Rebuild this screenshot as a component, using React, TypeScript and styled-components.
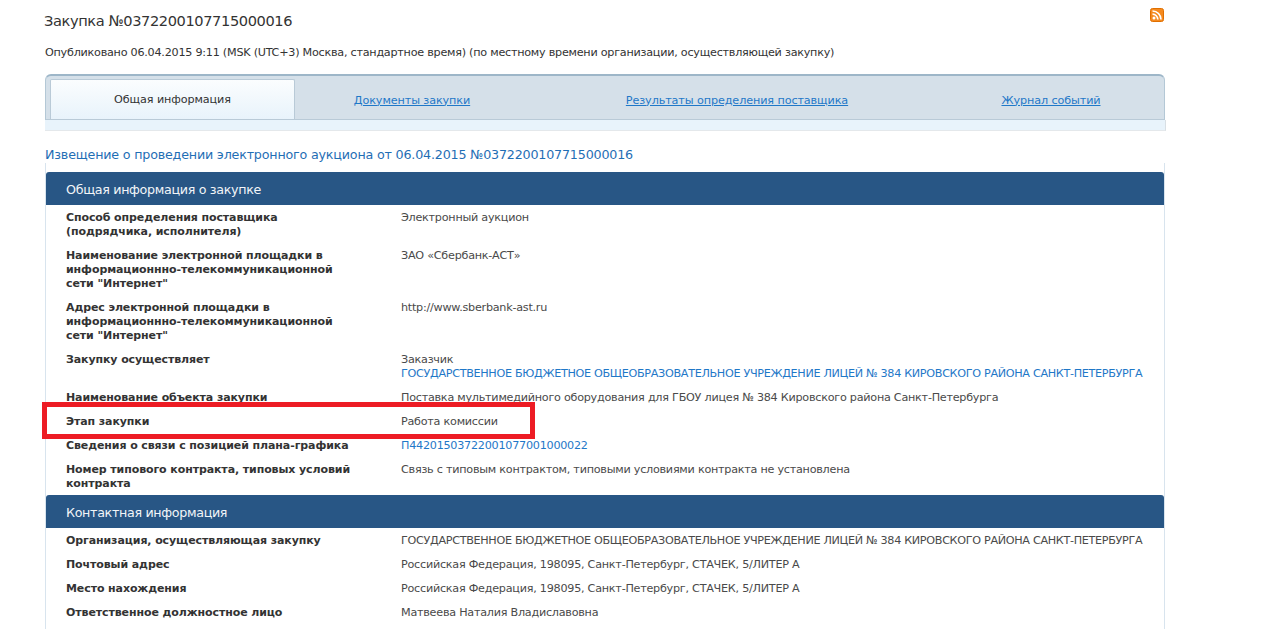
import React from 'react';
import styled, { createGlobalStyle } from 'styled-components';

const GlobalStyle = createGlobalStyle`
  html, body { margin: 0; padding: 0; background: #fff; overflow: hidden; }
  body { font-family: "DejaVu Sans", "Noto Sans", sans-serif; font-size: 11.2px; letter-spacing: -0.25px; color: #3c3c3c; }
`;

const Page = styled.div`
  position: relative;
  width: 1120px;
  height: 629px;
  margin-left: 45px;
`;

const TitleRow = styled.div`
  display: flex;
  justify-content: space-between;
  align-items: flex-start;
  height: 46px;
`;

const Title = styled.h1`
  margin: 11px 0 0 -1px;
  font-size: 14.6px;
  line-height: 19px;
  letter-spacing: -0.4px;
  font-weight: 400;
  color: #333;
`;

const Rss = styled.svg`
  width: 14px;
  height: 14px;
  margin: 8px 1px 0 0;
`;

const Published = styled.div`
  line-height: 14px;
  height: 28px;
  color: #333;
`;

const TabBar = styled.div`
  width: 1120px;
  height: 46px;
  box-sizing: border-box;
  padding: 5px 0 0 4px;
  display: grid;
  grid-template-columns: 245px 234px 416px 212px;
  background: #d5e0e9;
  border-top: 2px solid #9db6c8;
  border-right: 1px solid #b4c8d6;
  border-left: 1px solid #b4c8d6;
  border-bottom: 1px solid #b9cad7;
  border-radius: 6px 6px 0 0;
`;

const Tab = styled.div<{ $active?: boolean }>`
  display: flex;
  align-items: center;
  justify-content: center;
  margin-top: ${p => (p.$active ? '-2px' : '0')};
  letter-spacing: -0.1px;
  color: #333;
  background: ${p => (p.$active ? 'linear-gradient(#fbfdfe, #e8f3fb)' : 'transparent')};
  border: ${p => (p.$active ? '1px solid #b9cad7' : 'none')};
  border-bottom: none;
  border-radius: 2px 2px 0 0;
`;

const TabLink = styled.a`
  color: #1f78c8;
  text-decoration: underline;
`;

const TabStrip = styled.div`
  width: 1121px;
  height: 11px;
  background: #e8f3fb;
  border-bottom: 1px solid #e4e8eb;
  border-right: 1px solid #d8dfe4;
  box-sizing: border-box;
`;

const Notice = styled.div`
  margin-top: 16px;
  font-size: 12.7px;
  letter-spacing: -0.19px;
  line-height: 16px;
  height: 16px;
  color: #1f6eb5;
`;

const Sheet = styled.div`
  height: 466px;
  padding-top: 9px;
  box-sizing: border-box;
  border-left: 1px solid #d8e4ee;
  border-right: 1px solid #d8e4ee;
  width: 1120px;
`;

const SectionHead = styled.div`
  height: 33px;
  box-sizing: border-box;
  display: flex;
  align-items: center;
  padding: 1px 0 0 20px;
  background: #285685;
  color: #f2f5f8;
  font-size: 12.7px;
  letter-spacing: -0.33px;
  border-radius: 3px 3px 0 0;
`;

const Row = styled.div`
  display: grid;
  grid-template-columns: 335px 1fr;
  padding: 6px 0 4px 20px;
  line-height: 14px;
`;

const Label = styled.div`
  font-weight: 700;
  font-size: 11px;
  letter-spacing: -0.1px;
  color: #333;
  width: 288px;
`;

const Value = styled.div`
  color: #4a4a4a;
`;

const ValueLink = styled.a`
  color: #1f78c8;
  display: block;
`;

const OrgName = styled.span`
  letter-spacing: -0.32px;
`;

const Highlight = styled.div`
  position: absolute;
  left: -3px;
  top: 402px;
  width: 493px;
  height: 37px;
  box-sizing: border-box;
  border: 5px solid #ed1c24;
`;

const ORG = 'ГОСУДАРСТВЕННОЕ БЮДЖЕТНОЕ ОБЩЕОБРАЗОВАТЕЛЬНОЕ УЧРЕЖДЕНИЕ ЛИЦЕЙ № 384 КИРОВСКОГО РАЙОНА САНКТ-ПЕТЕРБУРГА';
const ADDRESS = 'Российская Федерация, 198095, Санкт-Петербург, СТАЧЕК, 5/ЛИТЕР А';

export default function App() {
  return (
    <Page>
      <GlobalStyle />
      <TitleRow>
        <Title>Закупка №0372200107715000016</Title>
        <Rss viewBox="0 0 14 14">
          <rect x="0.5" y="0.5" width="13" height="13" rx="2" fill="#f58a1f" stroke="#e06f00" />
          <circle cx="4" cy="10" r="1.5" fill="#fff" />
          <path d="M2.5 6.2a5.3 5.3 0 0 1 5.3 5.3M2.5 3a8.5 8.5 0 0 1 8.5 8.5" fill="none" stroke="#fff" strokeWidth="1.7" />
        </Rss>
      </TitleRow>
      <Published>Опубликовано 06.04.2015 9:11 (MSK (UTC+3) Москва, стандартное время) (по местному времени организации, осуществляющей закупку)</Published>
      <TabBar>
        <Tab $active>Общая информация</Tab>
        <Tab><TabLink>Документы закупки</TabLink></Tab>
        <Tab><TabLink>Результаты определения поставщика</TabLink></Tab>
        <Tab><TabLink>Журнал событий</TabLink></Tab>
      </TabBar>
      <TabStrip />
      <Notice>Извещение о проведении электронного аукциона от 06.04.2015 №0372200107715000016</Notice>
      <Sheet>
        <SectionHead>Общая информация о закупке</SectionHead>
        <Row><Label>Способ определения поставщика (подрядчика, исполнителя)</Label><Value>Электронный аукцион</Value></Row>
        <Row><Label>Наименование электронной площадки в информационнно-телекоммуникационной сети "Интернет"</Label><Value>ЗАО «Сбербанк-АСТ»</Value></Row>
        <Row><Label>Адрес электронной площадки в информационнно-телекоммуникационной сети "Интернет"</Label><Value>http://www.sberbank-ast.ru</Value></Row>
        <Row><Label>Закупку осуществляет</Label><Value>Заказчик<ValueLink><OrgName>{ORG}</OrgName></ValueLink></Value></Row>
        <Row><Label>Наименование объекта закупки</Label><Value>Поставка мультимедийного оборудования для ГБОУ лицея № 384 Кировского района Санкт-Петербурга</Value></Row>
        <Row><Label>Этап закупки</Label><Value>Работа комиссии</Value></Row>
        <Row><Label>Сведения о связи с позицией плана-графика</Label><Value><ValueLink>П44201503722001077001000022</ValueLink></Value></Row>
        <Row><Label>Номер типового контракта, типовых условий контракта</Label><Value>Связь с типовым контрактом, типовыми условиями контракта не установлена</Value></Row>
        <SectionHead>Контактная информация</SectionHead>
        <Row><Label>Организация, осуществляющая закупку</Label><Value><OrgName>{ORG}</OrgName></Value></Row>
        <Row><Label>Почтовый адрес</Label><Value>{ADDRESS}</Value></Row>
        <Row><Label>Место нахождения</Label><Value>{ADDRESS}</Value></Row>
        <Row><Label>Ответственное должностное лицо</Label><Value>Матвеева Наталия Владиславовна</Value></Row>
      </Sheet>
      <Highlight />
    </Page>
  );
}
